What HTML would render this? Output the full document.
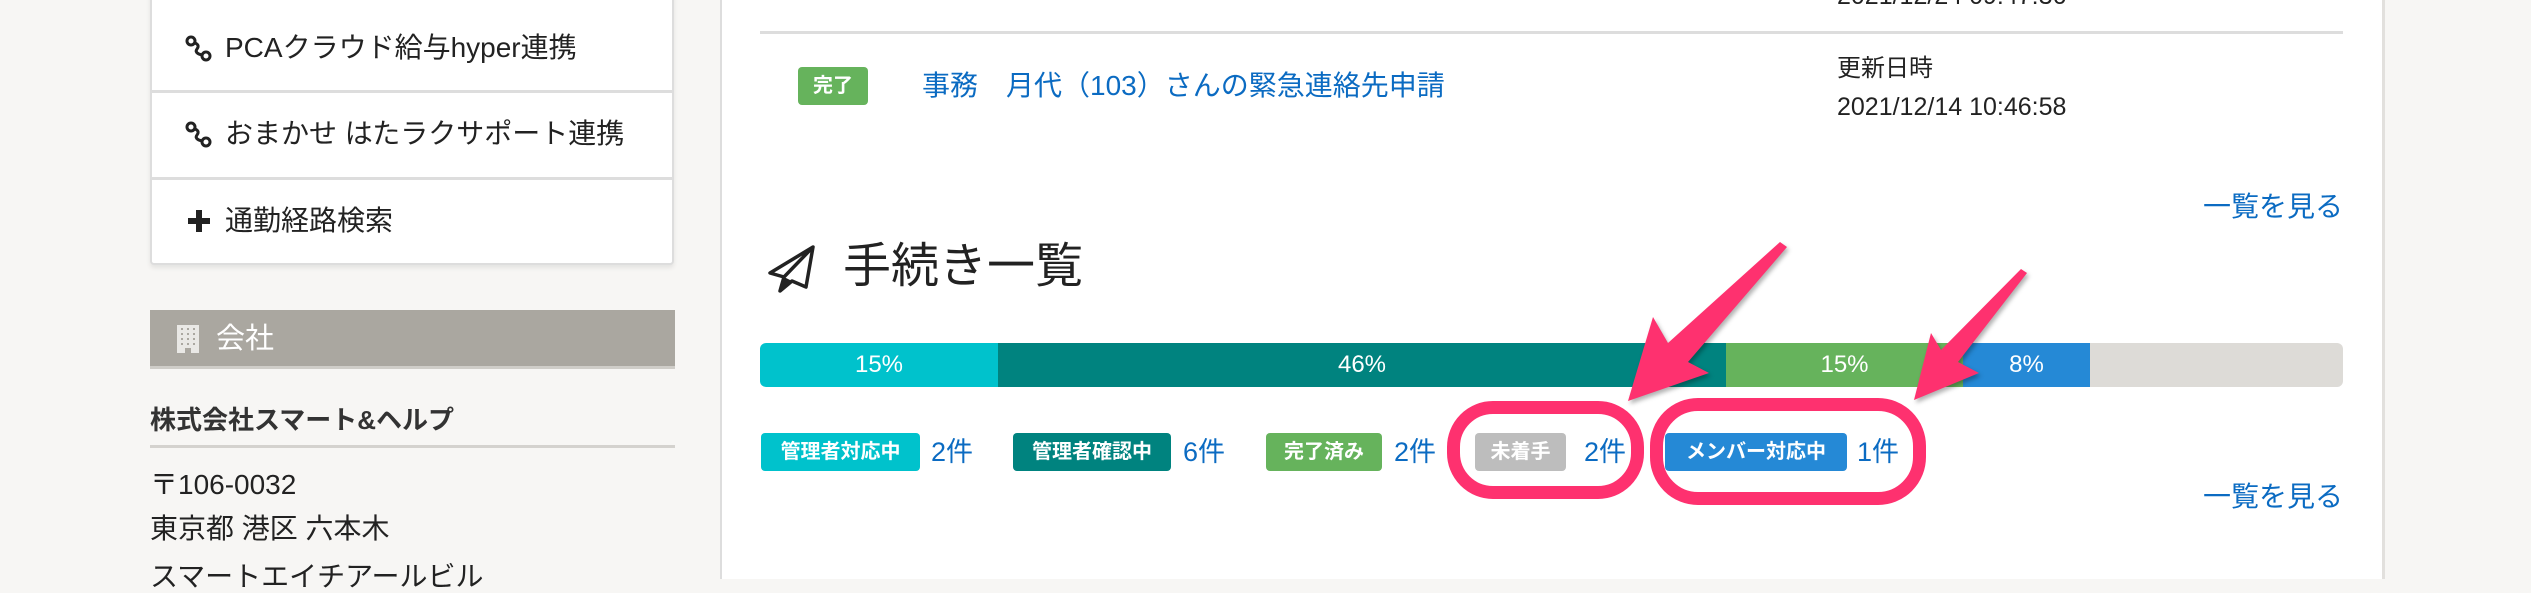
<!DOCTYPE html>
<html><head><meta charset="utf-8"><style>
*{margin:0;padding:0;box-sizing:border-box}
body{width:2531px;height:579px;overflow:hidden;background:#f7f6f4;position:relative;font-family:"Liberation Sans","Noto Sans CJK JP",sans-serif;color:#222}
.a{position:absolute;white-space:nowrap}
.card{position:absolute;left:150px;top:-10px;width:524px;height:275px;background:#fff;border:2px solid #ddd;border-radius:4px;box-shadow:0 3px 5px rgba(0,0,0,.08)}
.sep{position:absolute;left:150px;width:524px;height:3px;background:#ddd}
.row{position:absolute;left:225px;font-size:28px;line-height:30px}
.main{position:absolute;left:720px;top:0;width:1665px;height:579px;background:#fff;border-left:2px solid #ddd;border-right:3px solid #e2e0dd}
.lk{color:#0b6bc2}
.bd{position:absolute;top:433px;height:38px;border-radius:4px;color:#fff;font-weight:bold;font-size:20px;line-height:38px;text-align:center}
.cnt{position:absolute;top:433px;font-size:27px;line-height:38px;color:#0b6bc2}
.seg{position:absolute;top:343px;height:44px;color:#fff;font-size:24px;line-height:44px;text-align:center}
</style></head><body>
<div class="card"></div>
<div class="sep" style="top:90px"></div>
<div class="sep" style="top:177px"></div>
<svg class="a" style="left:184px;top:35px" width="30" height="28" viewBox="0 0 30 28"><g fill="none" stroke="#222" stroke-width="3"><circle cx="7" cy="6" r="4"/><circle cx="22" cy="21" r="4"/><path d="M11 8 Q16 10 13 14 Q10 18 18 20"/></g></svg>
<div class="row" style="top:33px">PCAクラウド給与hyper連携</div>
<svg class="a" style="left:184px;top:121px" width="30" height="28" viewBox="0 0 30 28"><g fill="none" stroke="#222" stroke-width="3"><circle cx="7" cy="6" r="4"/><circle cx="22" cy="21" r="4"/><path d="M11 8 Q16 10 13 14 Q10 18 18 20"/></g></svg>
<div class="row" style="top:119px">おまかせ はたラクサポート連携</div>
<svg class="a" style="left:187px;top:209px" width="24" height="24" viewBox="0 0 24 24"><path d="M9 1h6v8h8v6h-8v8h-6v-8h-8v-6h8z" fill="#222"/></svg>
<div class="row" style="top:206px">通勤経路検索</div>

<div class="a" style="left:150px;top:310px;width:525px;height:59px;background:#aaa7a0;border-bottom:3px solid #cfcdc8"></div>
<svg class="a" style="left:177px;top:325px" width="22" height="28" viewBox="0 0 22 28"><rect width="22" height="28" fill="#e9e8e5"/><g fill="#aaa7a0"><rect x="4" y="3" width="2" height="2"/><rect x="10" y="3" width="2" height="2"/><rect x="16" y="3" width="2" height="2"/><rect x="4" y="8" width="2" height="2"/><rect x="10" y="8" width="2" height="2"/><rect x="16" y="8" width="2" height="2"/><rect x="4" y="13" width="2" height="2"/><rect x="10" y="13" width="2" height="2"/><rect x="16" y="13" width="2" height="2"/><rect x="4" y="18" width="2" height="2"/><rect x="10" y="18" width="2" height="2"/><rect x="16" y="18" width="2" height="2"/><rect x="8" y="23" width="6" height="5"/></g></svg>
<div class="a" style="left:216px;top:322px;font-size:29px;line-height:34px;color:#fff">会社</div>
<div class="a" style="left:150px;top:405px;font-size:26px;line-height:30px;font-weight:bold;color:#333">株式会社スマート&amp;ヘルプ</div>
<div class="a" style="left:150px;top:445px;width:525px;height:3px;background:#d4d2ce"></div>
<div class="a" style="left:150px;top:469px;font-size:28px;line-height:32px">〒106-0032</div>
<div class="a" style="left:150px;top:513px;font-size:28px;line-height:32px">東京都 港区 六本木</div>
<div class="a" style="left:150px;top:561px;font-size:28px;line-height:32px">スマートエイチアールビル</div>

<div class="main"></div>
<div class="a" style="left:1837px;top:-17px;font-size:25px;line-height:26px">2021/12/24 09:47:36</div>
<div class="a" style="left:760px;top:31px;width:1583px;height:3px;background:#ddd"></div>
<div class="a" style="left:798px;top:67px;width:70px;height:38px;background:#66b35c;border-radius:4px;color:#fff;font-weight:bold;font-size:20px;line-height:38px;text-align:center">完了</div>
<div class="a lk" style="left:922px;top:70px;font-size:28px;line-height:32px">事務　月代（103）さんの緊急連絡先申請</div>
<div class="a" style="left:1837px;top:56px;font-size:24px;line-height:26px">更新日時</div>
<div class="a" style="left:1837px;top:94px;font-size:25px;line-height:26px">2021/12/14 10:46:58</div>
<div class="a lk" style="left:2203px;top:192px;font-size:28px;line-height:30px">一覧を見る</div>

<svg class="a" style="left:766px;top:243px" width="52" height="52" viewBox="0 0 52 52"><path d="M47 4 L4 30 L18 34 L14 48 L26 38 L40 44 Z M18 34 L47 4" fill="none" stroke="#222" stroke-width="3.5" stroke-linejoin="round"/><path d="M18 34 L14 48 L26 38 Z" fill="#222"/></svg>
<div class="a" style="left:843px;top:239px;font-size:48px;line-height:56px">手続き一覧</div>

<div class="seg" style="left:760px;width:238px;background:#00c2cc;border-radius:6px 0 0 6px">15%</div>
<div class="seg" style="left:998px;width:728px;background:#00837f">46%</div>
<div class="seg" style="left:1726px;width:237px;background:#66b35c">15%</div>
<div class="seg" style="left:1963px;width:127px;background:#2589d6">8%</div>
<div class="seg" style="left:2090px;width:253px;background:#dddbd7;border-radius:0 6px 6px 0"></div>

<div class="bd" style="left:761px;width:159px;background:#00c2cc">管理者対応中</div><div class="cnt" style="left:931px">2件</div>
<div class="bd" style="left:1013px;width:158px;background:#00837f">管理者確認中</div><div class="cnt" style="left:1183px">6件</div>
<div class="bd" style="left:1266px;width:116px;background:#66b35c">完了済み</div><div class="cnt" style="left:1394px">2件</div>
<div class="bd" style="left:1475px;width:91px;background:#bdbdbd">未着手</div><div class="cnt" style="left:1584px">2件</div>
<div class="bd" style="left:1665px;width:182px;background:#2589d6">メンバー対応中</div><div class="cnt" style="left:1857px">1件</div>
<div class="a lk" style="left:2203px;top:482px;font-size:28px;line-height:30px">一覧を見る</div>

<div class="a" style="left:1447px;top:401px;width:197px;height:98px;border:13px solid #fe316f;border-radius:46px"></div>
<div class="a" style="left:1650px;top:398px;width:276px;height:107px;border:13px solid #fe316f;border-radius:48px"></div>
<svg class="a" style="left:0;top:0;filter:drop-shadow(2px 3px 2px rgba(0,0,0,.3))" width="2531" height="579"><g fill="#fe316f"><polygon points="1780,242 1668,343 1653,317 1628,401 1709,373 1688,362 1787,247"/><polygon points="2021,269 1941,350 1931,333 1914,400 1979,373 1958,362 2027,273"/></g></svg>
</body></html>
